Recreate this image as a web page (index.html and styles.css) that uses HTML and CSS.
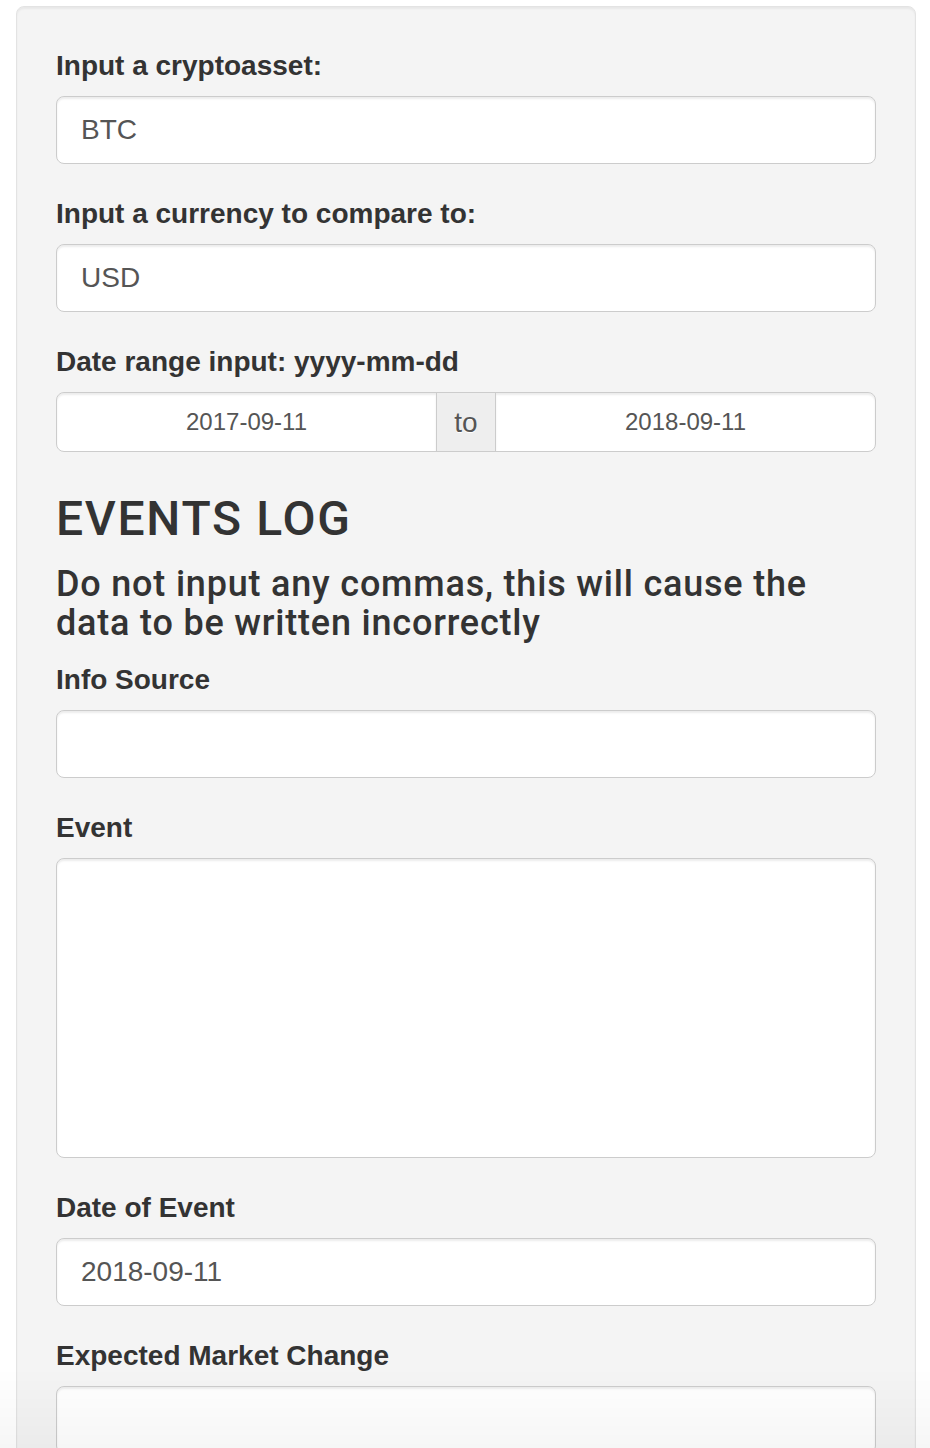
FILE: index.html
```html
<!DOCTYPE html>
<html lang="en">
<head>
    <meta charset="UTF-8">
    <meta name="viewport" content="width=device-width, initial-scale=1.0">
    <title>Events Log</title>
    <link rel="stylesheet" href="styles.css">
</head>
<body>

    <div class="well">
        <div class="form-group">
            <label for="asset">Input a cryptoasset:</label>
            <input type="text" id="asset" class="form-control" value="BTC">
        </div>

        <div class="form-group">
            <label for="currency">Input a currency to compare to:</label>
            <input type="text" id="currency" class="form-control" value="USD">
        </div>

        <div class="form-group">
            <label>Date range input: yyyy-mm-dd</label>
            <div class="input-daterange">
                <input type="text" class="form-control input-sm" value="2017-09-11">
                <span class="input-group-addon">to</span>
                <input type="text" class="form-control input-sm" value="2018-09-11">
            </div>
        </div>

        <h3>EVENTS LOG</h3>
        <h4>Do not input any commas, this will cause the data to be written incorrectly</h4>

        <div class="form-group">
            <label for="source">Info Source</label>
            <input type="text" id="source" class="form-control" value="">
        </div>

        <div class="form-group">
            <label for="event">Event</label>
            <textarea id="event" class="form-control textarea"></textarea>
        </div>

        <div class="form-group">
            <label for="eventDate">Date of Event</label>
            <input type="text" id="eventDate" class="form-control" value="2018-09-11">
        </div>

        <div class="form-group">
            <label for="change">Expected Market Change</label>
            <input type="text" id="change" class="form-control" value="">
        </div>
    </div>

    <div class="bottom-fade"></div>

</body>
</html>
```

FILE: styles.css
```css
:root {
    --well-bg: #f4f4f4;
    --well-border: #e3e3e3;
    --input-border: #cccccc;
    --text-color: #333333;
    --input-text: #555555;
}
* {
    box-sizing: border-box;
}
body {
    font-family: "Liberation Sans", Arial, Helvetica, sans-serif;
    color: var(--text-color);
    background: #ffffff;
    margin: 0;
    padding: 6px 14px 0 16px;
    height: 1448px;
    overflow: hidden;
}
.well {
    background: var(--well-bg);
    border: 1px solid var(--well-border);
    border-radius: 8px;
    padding: 39px 39px 40px 39px;
    box-shadow: inset 0 2px 2px rgba(0, 0, 0, 0.05);
}
.form-group {
    margin-bottom: 30px;
}
label {
    display: block;
    font-size: 28px;
    font-weight: bold;
    line-height: 40px;
    margin-bottom: 10px;
    letter-spacing: 0;
}
.form-control {
    display: block;
    width: 100%;
    height: 68px;
    padding: 12px 24px;
    font-family: inherit;
    font-size: 28px;
    color: var(--input-text);
    background: #ffffff;
    border: 1px solid var(--input-border);
    border-radius: 8px;
    box-shadow: inset 0 2px 2px rgba(0, 0, 0, 0.075);
    outline: none;
}
.textarea {
    height: 300px;
    resize: none;
}
.input-daterange {
    display: flex;
}
.input-sm {
    flex: 1;
    height: 60px;
    font-size: 24px;
    text-align: center;
    padding: 10px;
}
.input-daterange .input-sm:first-child {
    border-radius: 8px 0 0 8px;
}
.input-daterange .input-sm:last-child {
    border-radius: 0 8px 8px 0;
}
.input-group-addon {
    display: flex;
    align-items: center;
    justify-content: center;
    width: 60px;
    flex: none;
    height: 60px;
    font-size: 28px;
    color: var(--input-text);
    background: #eeeeee;
    border: 1px solid var(--input-border);
    margin: 0 -1px;
    text-shadow: 0 1px 0 #ffffff;
    position: relative;
    z-index: 1;
    padding-top: 2px;
}
h3,
h4 {
    font-family: Roboto, "Liberation Sans", Arial, sans-serif;
    font-weight: 500;
}
h3 {
    font-size: 48px;
    line-height: 53px;
    margin: 40px 0 20px 0;
    letter-spacing: 1.7px;
}
h4 {
    font-size: 36px;
    line-height: 39px;
    margin: 20px 0 17px 0;
    letter-spacing: 0.8px;
}
.bottom-fade {
    position: fixed;
    left: 0;
    right: 0;
    bottom: 0;
    height: 80px;
    background: linear-gradient(to bottom, rgba(0, 0, 0, 0), rgba(0, 0, 0, 0.035));
    pointer-events: none;
}
```
